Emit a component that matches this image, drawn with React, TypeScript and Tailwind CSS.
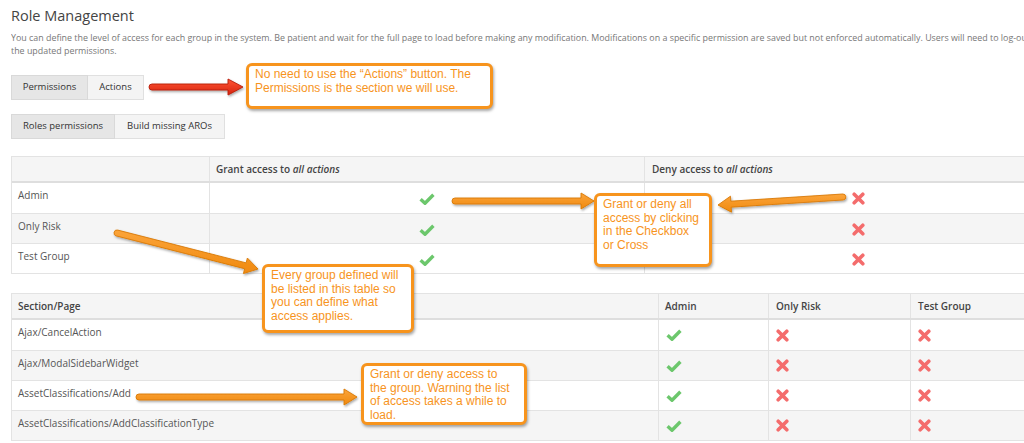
import React from "react";

const Check = () => (
  <svg width="16" height="12" viewBox="0 0 16 12" className="block">
    <path d="M1.6 6.2 L6 10.2 L14.4 1.8" fill="none" stroke="#6cc76c" strokeWidth="3.4" strokeLinejoin="round" />
  </svg>
);

const Cross = () => (
  <svg width="13" height="13" viewBox="0 0 13 13" className="block">
    <path d="M2.2 2.2 L10.8 10.8 M10.8 2.2 L2.2 10.8" fill="none" stroke="#f46c6c" strokeWidth="3.6" strokeLinecap="round" />
  </svg>
);

type ArrowProps = {
  x1: number;
  y1: number;
  x2: number;
  y2: number;
  fill: string;
  stroke: string;
  w?: number;
  hl?: number;
  hw?: number;
};

function Arrow({ x1, y1, x2, y2, fill, stroke, w = 6, hl = 13, hw = 8 }: ArrowProps) {
  const dx = x2 - x1;
  const dy = y2 - y1;
  const len = Math.hypot(dx, dy);
  const ux = dx / len;
  const uy = dy / len;
  const px = -uy;
  const py = ux;
  const h = w / 2;
  const bx = x2 - ux * hl;
  const by = y2 - uy * hl;
  const p = (x: number, y: number) => `${x.toFixed(2)} ${y.toFixed(2)}`;
  const d = [
    `M ${p(x1 + px * h, y1 + py * h)}`,
    `L ${p(bx + px * h, by + py * h)}`,
    `L ${p(bx + px * hw, by + py * hw)}`,
    `L ${p(x2, y2)}`,
    `L ${p(bx - px * hw, by - py * hw)}`,
    `L ${p(bx - px * h, by - py * h)}`,
    `L ${p(x1 - px * h, y1 - py * h)}`,
    `A ${h} ${h} 0 0 0 ${p(x1 + px * h, y1 + py * h)}`,
    "Z",
  ].join(" ");
  return <path d={d} fill={fill} stroke={stroke} strokeWidth="0.9" strokeLinejoin="round" filter="url(#sh)" />;
}

const Callout = ({ className, children }: { className: string; children: React.ReactNode }) => (
  <div
    className={`absolute rounded-[6px] border-[3px] border-[#f7941d] bg-white pl-[6px] pt-[2px] font-['Liberation_Sans',Arial,sans-serif] text-[12px] leading-[13.5px] text-[#f7941d] shadow-[1px_2px_3px_rgba(0,0,0,0.35)] ${className}`}
  >
    {children}
  </div>
);

const groups = ["Admin", "Only Risk", "Test Group"];
const pages = [
  "Ajax/CancelAction",
  "Ajax/ModalSidebarWidget",
  "AssetClassifications/Add",
  "AssetClassifications/AddClassificationType",
];

export default function App() {
  return (
    <div className="relative h-[443px] w-[1024px] overflow-hidden bg-white font-['Open_Sans',sans-serif]">
      <div className="w-[1080px] pl-[11px]">
        <h1 className="pt-[6px] text-[14.5px] leading-[20px] text-[#444]">Role Management</h1>
        <p className="mt-[5px] w-[1013px] overflow-hidden whitespace-nowrap text-[8.9px] leading-[13px] text-[#777]">
          You can define the level of access for each group in the system. Be patient and wait for the full page to load before making any modification. Modifications on a specific permission are saved but not enforced automatically. Users will need to log-out and log-in again to get
          <br />
          the updated permissions.
        </p>

        <div className="mt-[18px] flex h-[25px] w-max text-[9.5px] text-[#333]">
          <div className="flex w-[77px] items-center justify-center border border-[#d9d9d9] bg-[#e6e6e6]">Permissions</div>
          <div className="flex w-[56px] items-center justify-center border border-l-0 border-[#e0e0e0] bg-[#f4f4f4]">Actions</div>
        </div>

        <div className="mt-[14px] flex h-[25px] w-max text-[9.5px] text-[#333]">
          <div className="flex w-[104px] items-center justify-center border border-[#d9d9d9] bg-[#e6e6e6]">Roles permissions</div>
          <div className="flex w-[110px] items-center justify-center border border-l-0 border-[#e0e0e0] bg-[#f4f4f4]">Build missing AROs</div>
        </div>

        {/* Table 1 */}
        <div className="mt-[17px] w-[1062px] border border-[#e3e3e3] text-[10px] text-[#555]">
          <div className="flex h-[26px] border-b-2 border-[#dedede] bg-[#f5f5f5] font-semibold text-[#444]">
            <div className="w-[198px] border-r border-[#e3e3e3]" />
            <div className="flex w-[435px] items-center border-r border-[#e3e3e3] px-[6px]">
              Grant access to&nbsp;<em>all actions</em>
            </div>
            <div className="flex flex-1 items-center px-[7px]">
              Deny access to&nbsp;<em>all actions</em>
            </div>
          </div>
          {groups.map((g, i) => (
            <div
              key={g}
              className={`flex h-[30px] ${i > 0 ? "border-t border-[#e3e3e3]" : ""} ${i % 2 === 1 ? "bg-[#f5f5f5]" : "bg-white"}`}
            >
              <div className="w-[198px] border-r border-[#e3e3e3] px-[6px] pt-[5px] leading-[14px]">{g}</div>
              <div className="flex w-[435px] items-center justify-center border-r border-[#e3e3e3] pt-[2px]">
                <Check />
              </div>
              <div className="flex flex-1 items-center justify-center pt-[1px]">
                <Cross />
              </div>
            </div>
          ))}
        </div>

        {/* Table 2 */}
        <div className="mt-[19px] w-[1062px] border border-[#e3e3e3] text-[10px] text-[#555]">
          <div className="flex h-[26px] border-b-2 border-[#dedede] bg-[#f5f5f5] font-semibold text-[#444]">
            <div className="flex w-[647px] items-center border-r border-[#e3e3e3] px-[6px]">Section/Page</div>
            <div className="flex w-[110px] items-center border-r border-[#e3e3e3] px-[6px]">Admin</div>
            <div className="flex w-[142px] items-center border-r border-[#e3e3e3] px-[7px]">Only Risk</div>
            <div className="flex flex-1 items-center px-[7px]">Test Group</div>
          </div>
          {pages.map((pg, i) => (
            <div
              key={pg}
              className={`flex h-[30px] ${i > 0 ? "border-t border-[#e3e3e3]" : ""} ${i % 2 === 1 ? "bg-[#f5f5f5]" : "bg-white"}`}
            >
              <div className="w-[647px] border-r border-[#e3e3e3] px-[6px] pt-[5px] leading-[14px]">{pg}</div>
              <div className="flex w-[110px] items-center border-r border-[#e3e3e3] pl-[7px]">
                <Check />
              </div>
              <div className="flex w-[142px] items-center border-r border-[#e3e3e3] pl-[7px]">
                <Cross />
              </div>
              <div className="flex flex-1 items-center pl-[7px]">
                <Cross />
              </div>
            </div>
          ))}
        </div>
      </div>

      {/* Annotation overlay */}
      <svg className="pointer-events-none absolute left-0 top-0" width="1024" height="443">
        <defs>
          <filter id="sh" x="-20%" y="-50%" width="140%" height="200%">
            <feDropShadow dx="1" dy="1.5" stdDeviation="1" floodColor="#000" floodOpacity="0.35" />
          </filter>
          <linearGradient id="red" x1="0" y1="0" x2="0" y2="1">
            <stop offset="0" stopColor="#ff5535" />
            <stop offset="1" stopColor="#d62410" />
          </linearGradient>
          <linearGradient id="org" x1="0" y1="0" x2="0" y2="1">
            <stop offset="0" stopColor="#fba43a" />
            <stop offset="1" stopColor="#f08a10" />
          </linearGradient>
        </defs>
        <Arrow x1={152} y1={87} x2={243} y2={87} fill="url(#red)" stroke="#b71c08" hl={15} hw={8} />
        <Arrow x1={455} y1={201} x2={594} y2={201} fill="url(#org)" stroke="#d97906" />
        <Arrow x1={843} y1={197} x2={718} y2={205} fill="url(#org)" stroke="#d97906" />
        <Arrow x1={117} y1={233} x2={258} y2={269} fill="url(#org)" stroke="#d97906" />
        <Arrow x1={139} y1={397} x2={357} y2={397} fill="url(#org)" stroke="#d97906" />
      </svg>

      <Callout className="left-[246px] top-[63px] h-[46px] w-[247px]">
        No need to use the “Actions” button. The
        <br />
        Permissions is the section we will use.
      </Callout>
      <Callout className="left-[594px] top-[193px] h-[74px] w-[118px]">
        Grant or deny all
        <br />
        access by clicking
        <br />
        in the Checkbox
        <br />
        or Cross
      </Callout>
      <Callout className="left-[262px] top-[264px] h-[69px] w-[152px]">
        Every group defined will
        <br />
        be listed in this table so
        <br />
        you can define what
        <br />
        access applies.
      </Callout>
      <Callout className="left-[361px] top-[363px] h-[62px] w-[166px]">
        Grant or deny access to
        <br />
        the group. Warning the list
        <br />
        of access takes a while to
        <br />
        load.
      </Callout>
    </div>
  );
}
